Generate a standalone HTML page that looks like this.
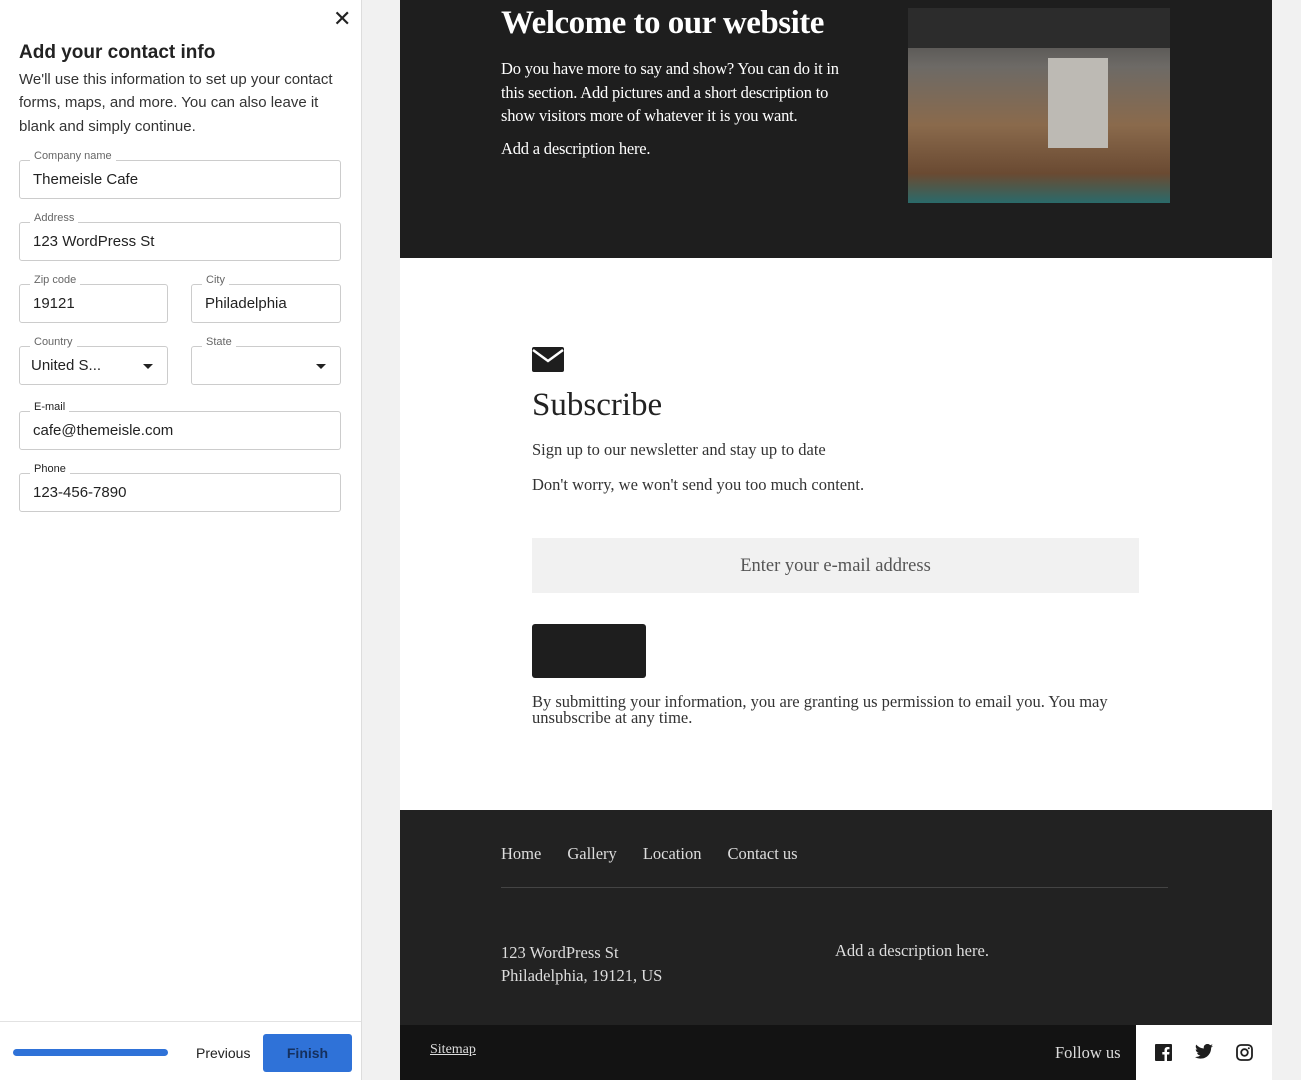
<!DOCTYPE html>
<html><head><style>
*{box-sizing:border-box;margin:0;padding:0}
body{width:1301px;height:1080px;position:relative;background:#f1f1f1;font-family:"Liberation Sans",sans-serif;overflow:hidden}
.left{position:absolute;left:0;top:0;width:362px;height:1080px;background:#fff;border-right:1px solid #ddd}
.abs{position:absolute}
.fld{position:absolute;border:1px solid #ccc;border-radius:3px;height:39px;font-size:15px;color:#222;padding-left:13px;line-height:38px}
.lbl{position:absolute;top:-12px;left:10px;background:#fff;padding:0 4px;font-size:11px;color:#666;line-height:14px}
.caret{position:absolute;right:14px;top:17px;width:0;height:0;border-left:5px solid transparent;border-right:5px solid transparent;border-top:5px solid #222}
.site{position:absolute;left:400px;top:0;width:872px;height:1080px;background:#fff;font-family:"Liberation Serif",serif}
.hero{position:absolute;left:0;top:0;width:872px;height:258px;background:#1e1e1e;color:#fff}
.foot{position:absolute;left:0;top:810px;width:872px;height:215px;background:#222;color:#ddd}
.bar{position:absolute;left:0;top:1025px;width:872px;height:55px;background:#131313;color:#ddd}
</style></head><body>
<div class="left">
  <div class="abs" style="left:333px;top:6px;font-size:22px;color:#222">✕</div>
  <div class="abs" style="left:19px;top:42px;font-size:19px;font-weight:bold;color:#222">Add your contact info</div>
  <div class="abs" style="left:19px;top:68px;width:335px;font-size:15px;line-height:23.3px;color:#333">We'll use this information to set up your contact forms, maps, and more. You can also leave it blank and simply continue.</div>
  <div class="fld" style="left:19px;top:160px;width:322px"><span class="lbl">Company name</span>Themeisle Cafe</div>
  <div class="fld" style="left:19px;top:222px;width:322px"><span class="lbl">Address</span>123 WordPress St</div>
  <div class="fld" style="left:19px;top:284px;width:149px"><span class="lbl">Zip code</span>19121</div>
  <div class="fld" style="left:191px;top:284px;width:150px"><span class="lbl">City</span>Philadelphia</div>
  <div class="fld" style="left:19px;top:346px;width:149px;padding-left:11px"><span class="lbl">Country</span>United S...<span class="caret"></span></div>
  <div class="fld" style="left:191px;top:346px;width:150px"><span class="lbl">State</span><span class="caret"></span></div>
  <div class="fld" style="left:19px;top:411px;width:322px"><span class="lbl" style="color:#222">E-mail</span>cafe@themeisle.com</div>
  <div class="fld" style="left:19px;top:473px;width:322px"><span class="lbl" style="color:#222">Phone</span>123-456-7890</div>
  <div class="abs" style="left:0;top:1021px;width:361px;border-top:1px solid #e2e2e2"></div>
  <div class="abs" style="left:13px;top:1049px;width:155px;height:7px;border-radius:4px;background:#2f72d8"></div>
  <div class="abs" style="left:196px;top:1045px;font-size:14px;color:#222">Previous</div>
  <div class="abs" style="left:263px;top:1034px;width:89px;height:38px;border-radius:3px;background:#2f72d8;color:#15305e;font-size:14px;font-weight:bold;text-align:center;line-height:38px">Finish</div>
</div>
<div class="site">
  <div class="hero">
    <div class="abs" style="left:101px;top:5px;font-size:33px;font-weight:bold;letter-spacing:-0.5px">Welcome to our website</div>
    <div class="abs" style="left:101px;top:57px;width:362px;font-size:16.5px;line-height:23.5px;letter-spacing:-0.2px">Do you have more to say and show? You can do it in this section. Add pictures and a short description to show visitors more of whatever it is you want.</div>
    <div class="abs" style="left:101px;top:139px;font-size:16.5px;letter-spacing:-0.2px">Add a description here.</div>
    <div class="abs" style="left:508px;top:8px;width:262px;height:195px;background:linear-gradient(180deg,#3b3b3b 0%,#6d6a66 30%,#8a6a4c 60%,#6a4a32 85%,#2a6a6a 100%)">
      <div class="abs" style="left:0;top:0;width:262px;height:40px;background:#2c2c2c"></div>
      <div class="abs" style="left:140px;top:50px;width:60px;height:90px;background:#bdbab4"></div>
    </div>
  </div>
  <svg class="abs" style="left:132px;top:347px" width="32" height="25" viewBox="0 0 32 25"><rect width="32" height="25" rx="2" fill="#1e1e1e"/><path d="M1 3 L16 14 L31 3" stroke="#fff" stroke-width="2.5" fill="none"/></svg>
  <div class="abs" style="left:132px;top:387px;font-size:33px;color:#222">Subscribe</div>
  <div class="abs" style="left:132px;top:440px;font-size:16.5px;color:#333">Sign up to our newsletter and stay up to date</div>
  <div class="abs" style="left:132px;top:475px;font-size:16.5px;color:#333">Don't worry, we won't send you too much content.</div>
  <div class="abs" style="left:132px;top:538px;width:607px;height:55px;background:#f1f1f1;text-align:center;line-height:57px;font-size:18.5px;color:#555">Enter your e-mail address</div>
  <div class="abs" style="left:132px;top:624px;width:114px;height:54px;background:#1e1e1e;border-radius:3px"></div>
  <div class="abs" style="left:132px;top:694px;width:620px;font-size:16.5px;line-height:16px;color:#333">By submitting your information, you are granting us permission to email you. You may unsubscribe at any time.</div>
  <div class="foot">
    <div class="abs" style="left:101px;top:34px;font-size:16.5px">Home<span style="margin-left:26px">Gallery</span><span style="margin-left:26px">Location</span><span style="margin-left:26px">Contact us</span></div>
    <div class="abs" style="left:101px;top:77px;width:667px;border-top:1px solid #444"></div>
    <div class="abs" style="left:101px;top:131px;font-size:16.5px;line-height:23px">123 WordPress St<br>Philadelphia, 19121, US</div>
    <div class="abs" style="left:435px;top:131px;font-size:16.5px">Add a description here.</div>
  </div>
  <div class="bar">
    <div class="abs" style="left:30px;top:17px;font-size:14px;text-decoration:underline">Sitemap</div>
    <div class="abs" style="left:655px;top:18px;font-size:16.5px">Follow us</div>
    <div class="abs" style="left:736px;top:0;width:136px;height:55px;background:#fff">
      <svg class="abs" style="left:19px;top:19px" width="17" height="17" viewBox="0 0 17 17"><rect width="17" height="17" rx="1" fill="#1e1e1e"/><path d="M12 17V10.5h2.2l.3-2.5H12V6.5c0-.7.2-1.2 1.2-1.2h1.3V3.1c-.2 0-1-.1-1.9-.1-1.9 0-3.1 1.1-3.1 3.2V8H7.3v2.5h2.2V17z" fill="#fff"/></svg>
      <svg class="abs" style="left:59px;top:19px" width="18" height="15" viewBox="0 0 24 20"><path d="M24 2.4a10 10 0 0 1-2.8.8A5 5 0 0 0 23.3.4a10 10 0 0 1-3.1 1.2A4.9 4.9 0 0 0 11.8 6 14 14 0 0 1 1.7.9a4.9 4.9 0 0 0 1.5 6.6A4.9 4.9 0 0 1 1 6.9a4.9 4.9 0 0 0 3.9 4.8 4.9 4.9 0 0 1-2.2.1 4.9 4.9 0 0 0 4.6 3.4A9.9 9.9 0 0 1 0 17.3 14 14 0 0 0 7.5 19.5c9.1 0 14-7.5 14-14v-.6A10 10 0 0 0 24 2.4z" fill="#1e1e1e"/></svg>
      <svg class="abs" style="left:100px;top:19px" width="17" height="17" viewBox="0 0 17 17"><rect x="1" y="1" width="15" height="15" rx="4" stroke="#1e1e1e" stroke-width="1.8" fill="none"/><circle cx="8.5" cy="8.5" r="3.3" stroke="#1e1e1e" stroke-width="1.8" fill="none"/><circle cx="12.8" cy="4.2" r="1" fill="#1e1e1e"/></svg>
    </div>
  </div>
</div>
</body></html>
